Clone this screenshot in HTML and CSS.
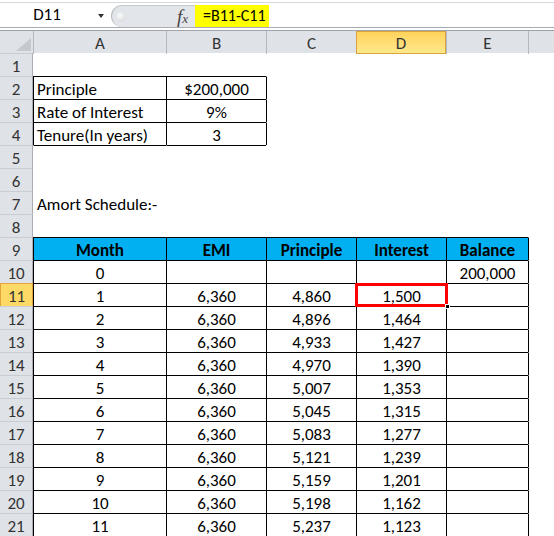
FILE: index.html
```html
<!DOCTYPE html>
<html lang="en">
<head>
  <meta charset="UTF-8">
  <title>Amort Schedule</title>
  <link rel="stylesheet" href="styles.css">
</head>
<body>
  <!-- Formula Bar -->
  <div class="formula-bar">
    <div class="name-box"><span class="name">D11</span><span class="caret"></span></div>
    <div class="fx-area"><span class="knob"></span><span class="fx"><i>f</i><i class="sub">x</i></span></div>
    <div class="formula">=B11-C11</div>
  </div>

  <!-- Column Headers -->
  <div class="col-head">
    <div class="corner"><span class="tri"></span></div>
    <div class="ch">A</div>
    <div class="ch">B</div>
    <div class="ch">C</div>
    <div class="ch sel">D</div>
    <div class="ch">E</div>
    <div class="ch"></div>
  </div>

  <!-- Sheet -->
  <div class="sheet">
    <div class="row"><div class="rh">1</div><div class="c"></div><div class="c"></div><div class="c"></div><div class="c"></div><div class="c"></div><div class="c"></div></div>
    <div class="row"><div class="rh">2</div><div class="c l bt bl">Principle</div><div class="c bt bl">$200,000</div><div class="c bl"></div><div class="c"></div><div class="c"></div><div class="c"></div></div>
    <div class="row"><div class="rh">3</div><div class="c l bt bl">Rate of Interest</div><div class="c bt bl">9%</div><div class="c bl"></div><div class="c"></div><div class="c"></div><div class="c"></div></div>
    <div class="row"><div class="rh">4</div><div class="c l bt bl">Tenure(In years)</div><div class="c bt bl">3</div><div class="c bl"></div><div class="c"></div><div class="c"></div><div class="c"></div></div>
    <div class="row"><div class="rh">5</div><div class="c bt"></div><div class="c bt"></div><div class="c"></div><div class="c"></div><div class="c"></div><div class="c"></div></div>
    <div class="row"><div class="rh">6</div><div class="c"></div><div class="c"></div><div class="c"></div><div class="c"></div><div class="c"></div><div class="c"></div></div>
    <div class="row"><div class="rh">7</div><div class="c l">Amort Schedule:-</div><div class="c"></div><div class="c"></div><div class="c"></div><div class="c"></div><div class="c"></div></div>
    <div class="row"><div class="rh">8</div><div class="c"></div><div class="c"></div><div class="c"></div><div class="c"></div><div class="c"></div><div class="c"></div></div>
    <div class="row"><div class="rh">9</div><div class="c hd bt bl">Month</div><div class="c hd bt bl">EMI</div><div class="c hd bt bl">Principle</div><div class="c hd bt bl">Interest</div><div class="c hd bt bl">Balance</div><div class="c bl"></div></div>
    <div class="row"><div class="rh">10</div><div class="c bt bl">0</div><div class="c bt bl"></div><div class="c bt bl"></div><div class="c bt bl"></div><div class="c bt bl">200,000</div><div class="c bl"></div></div>
    <div class="row"><div class="rh sel">11</div><div class="c bt bl">1</div><div class="c bt bl">6,360</div><div class="c bt bl">4,860</div><div class="c bt bl active">1,500<span class="sel-box"></span><span class="handle"></span></div><div class="c bt bl"></div><div class="c bl"></div></div>
    <div class="row"><div class="rh">12</div><div class="c bt bl">2</div><div class="c bt bl">6,360</div><div class="c bt bl">4,896</div><div class="c bt bl">1,464</div><div class="c bt bl"></div><div class="c bl"></div></div>
    <div class="row"><div class="rh">13</div><div class="c bt bl">3</div><div class="c bt bl">6,360</div><div class="c bt bl">4,933</div><div class="c bt bl">1,427</div><div class="c bt bl"></div><div class="c bl"></div></div>
    <div class="row"><div class="rh">14</div><div class="c bt bl">4</div><div class="c bt bl">6,360</div><div class="c bt bl">4,970</div><div class="c bt bl">1,390</div><div class="c bt bl"></div><div class="c bl"></div></div>
    <div class="row"><div class="rh">15</div><div class="c bt bl">5</div><div class="c bt bl">6,360</div><div class="c bt bl">5,007</div><div class="c bt bl">1,353</div><div class="c bt bl"></div><div class="c bl"></div></div>
    <div class="row"><div class="rh">16</div><div class="c bt bl">6</div><div class="c bt bl">6,360</div><div class="c bt bl">5,045</div><div class="c bt bl">1,315</div><div class="c bt bl"></div><div class="c bl"></div></div>
    <div class="row"><div class="rh">17</div><div class="c bt bl">7</div><div class="c bt bl">6,360</div><div class="c bt bl">5,083</div><div class="c bt bl">1,277</div><div class="c bt bl"></div><div class="c bl"></div></div>
    <div class="row"><div class="rh">18</div><div class="c bt bl">8</div><div class="c bt bl">6,360</div><div class="c bt bl">5,121</div><div class="c bt bl">1,239</div><div class="c bt bl"></div><div class="c bl"></div></div>
    <div class="row"><div class="rh">19</div><div class="c bt bl">9</div><div class="c bt bl">6,360</div><div class="c bt bl">5,159</div><div class="c bt bl">1,201</div><div class="c bt bl"></div><div class="c bl"></div></div>
    <div class="row"><div class="rh">20</div><div class="c bt bl">10</div><div class="c bt bl">6,360</div><div class="c bt bl">5,198</div><div class="c bt bl">1,162</div><div class="c bt bl"></div><div class="c bl"></div></div>
    <div class="row"><div class="rh">21</div><div class="c bt bl">11</div><div class="c bt bl">6,360</div><div class="c bt bl">5,237</div><div class="c bt bl">1,123</div><div class="c bt bl"></div><div class="c bl"></div></div>
  </div>
</body>
</html>
```

FILE: styles.css
```css
/* General */
body {
  margin: 0;
  font-family: Carlito, Lato, 'Liberation Sans', sans-serif;
  font-size: 17px;
  color: #000;
  background: #fff;
  width: 554px;
  height: 536px;
  overflow: hidden;
}

/* Formula Bar */
.formula-bar {
  display: flex;
  height: 24px;
  margin: 2px 0;
  border-top: 1px solid #d5d8dc;
  border-bottom: 1px solid #a8acb2;
}

.name-box {
  width: 111px;
  display: flex;
  align-items: center;
}

.name {
  width: 94px;
  text-align: center;
  line-height: 24px;
  align-self: flex-start;
}

.caret {
  width: 0;
  height: 0;
  margin: 2px 0 0 4px;
  border-top: 4px solid #333;
  border-left: 3px solid transparent;
  border-right: 3px solid transparent;
}

.fx-area {
  width: 84px;
  margin-top: 2px;
  display: flex;
  align-items: center;
  background: #e2e5e9;
  border-left: 1px solid #b4b8bd;
  border-top: 1px solid #c4c8cc;
  border-radius: 12px 0 0 12px;
  box-sizing: border-box;
}

.knob {
  width: 10px;
  height: 10px;
  margin-left: 4px;
  border-radius: 50%;
  background: radial-gradient(circle at 40% 35%, #fbfbfb, #cdd0d4);
}

.fx {
  margin-left: auto;
  margin-right: 7px;
  font-family: 'Liberation Serif', serif;
  color: #444;
  font-size: 19px;
}

.fx .sub {
  font-size: 13px;
}

.formula {
  flex: none;
  width: 66px;
  margin-top: 2px;
  padding-left: 8px;
  background: #ffff00;
  font-size: 16px;
  line-height: 22px;
  white-space: nowrap;
}

/* Column Headers */
.col-head,
.row {
  display: grid;
  grid-template-columns: 33px 133px 100px 90px 90px 82px 1fr;
  height: 23px;
  box-sizing: border-box;
}

.col-head {
  border-top: 1px solid #9fa4aa;
  background: #dfe2e6;
}

.corner {
  display: flex;
  align-items: flex-end;
  justify-content: flex-end;
  padding: 0 2px 3px 0;
}

.tri {
  width: 0;
  height: 0;
  border-left: 15px solid transparent;
  border-bottom: 13px solid #c5c9ce;
}

.ch {
  border-left: 1px solid #b3b8be;
  text-align: center;
  color: #333;
  line-height: 19px;
  padding-top: 3px;
}

.ch.sel {
  background: linear-gradient(#ffd35c, #ffe98c);
  border: 1px solid #d9a33f;
  padding-top: 2px;
}

/* Sheet */
.rh {
  background: #dfe2e6;
  border-top: 1px solid #c9cdd2;
  border-right: 1px solid #a9aeb4;
  text-align: center;
  color: #333;
  line-height: 19px;
  padding-top: 3px;
}

.rh.sel {
  background: #ffd966;
  border: 1px solid #e3a43c;
  border-bottom: none;
}

.c {
  border-top: 1px solid transparent;
  border-left: 1px solid transparent;
  text-align: center;
  white-space: nowrap;
  line-height: 19px;
  padding-top: 3px;
}

.c.l {
  text-align: left;
  padding-left: 3px;
}

.bt {
  border-top-color: #000;
}

.bl {
  border-left-color: #000;
}

.hd {
  background: #00b0f0;
  font-weight: bold;
}

/* Active Cell */
.active {
  position: relative;
}

.sel-box {
  position: absolute;
  left: -2px;
  top: -1px;
  right: -2px;
  bottom: -1px;
  border: 3px solid #ff0000;
}

.handle {
  position: absolute;
  right: -4px;
  bottom: -3px;
  width: 3px;
  height: 3px;
  background: #000;
  border: 1px solid #fff;
}
```
